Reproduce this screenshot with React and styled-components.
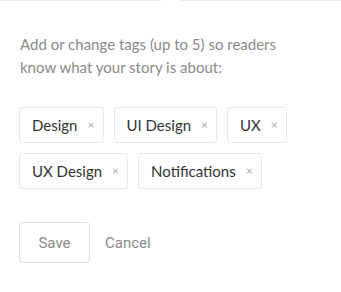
import React from 'react';
import styled, { createGlobalStyle } from 'styled-components';

const GlobalStyle = createGlobalStyle`
  body {
    margin: 0;
    background: #fff;
    font-family: Lato, "Liberation Sans", sans-serif;
  }
`;

const Panel = styled.div`
  position: relative;
  width: 341px;
  height: 292px;
  box-sizing: border-box;
  padding: 32px 19px 0;
  border-top: 1px solid #ececec;
`;

const Notch = styled.span`
  position: absolute;
  top: -1px;
  left: 161px;
  width: 19px;
  height: 1px;
  background: #fff;
`;

const Hint = styled.p`
  margin: 0 0 0 1px;
  font-size: 15px;
  line-height: 23px;
  color: #8a8a8a;
`;

const TagList = styled.div`
  display: flex;
  flex-wrap: wrap;
  gap: 10px;
  margin-top: 28px;
`;

const Tag = styled.div`
  display: flex;
  align-items: center;
  height: 36px;
  box-sizing: border-box;
  padding: 0 9px 0 12px;
  border: 1px solid #e9e9e9;
  border-radius: 3px;
  font-size: 15px;
  color: #333;
`;

const Remove = styled.span`
  display: inline-block;
  width: 6px;
  margin-left: 10px;
  font-size: 12px;
  line-height: 1;
  color: #aaa;
`;

const Actions = styled.div`
  display: flex;
  align-items: center;
  gap: 14px;
  margin-top: 33px;
  font-family: Roboto, "Liberation Sans", sans-serif;
`;

const Button = styled.button`
  width: ${(p) => (p.$outlined ? '71px' : 'auto')};
  height: 41px;
  background: #fff;
  border: 1px solid ${(p) => (p.$outlined ? '#dedede' : 'transparent')};
  border-radius: 4px;
  padding: 0;
  font-family: inherit;
  font-size: 15px;
  color: #8a8a8a;
`;

const tags = ['Design', 'UI Design', 'UX', 'UX Design', 'Notifications'];

export default function App() {
  return (
    <>
      <GlobalStyle />
      <Panel>
        <Notch />
        <Hint>
          Add or change tags (up to 5) so readers
          <br />
          know what your story is about:
        </Hint>
        <TagList>
          {tags.map((tag) => (
            <Tag key={tag}>
              {tag}
              <Remove>×</Remove>
            </Tag>
          ))}
        </TagList>
        <Actions>
          <Button $outlined>Save</Button>
          <Button>Cancel</Button>
        </Actions>
      </Panel>
    </>
  );
}
